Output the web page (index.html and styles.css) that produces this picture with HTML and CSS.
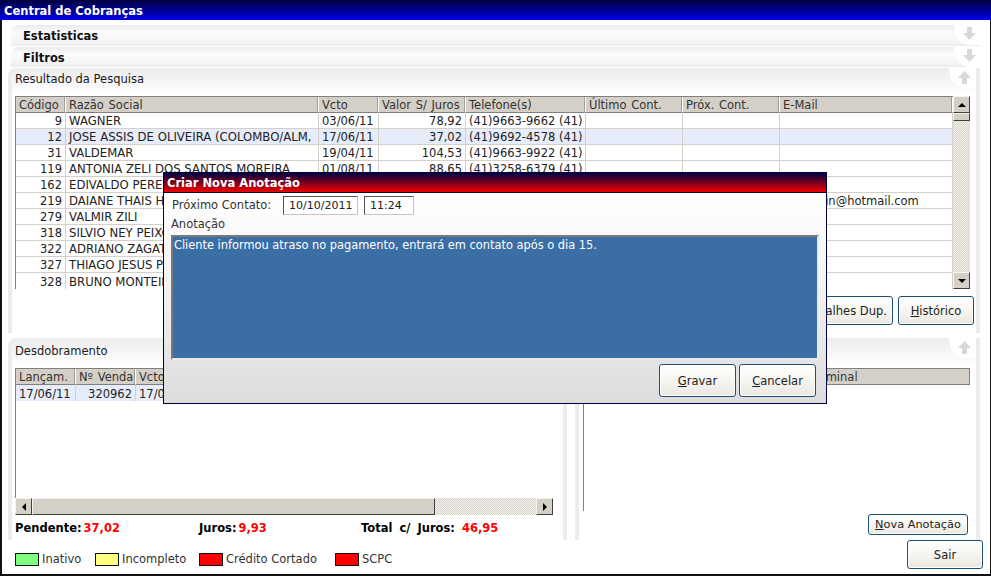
FILE: index.html
```html
<!DOCTYPE html>
<html lang="pt-BR">
<head>
<meta charset="utf-8">
<title>Central de Cobranças</title>
<link rel="stylesheet" href="styles.css">
</head>
<body>
<div class="window">
  <header class="titlebar">Central de Cobranças</header>
  <main class="content">
    <section class="strip first">
      <h2 class="strip-title">Estatisticas</h2>
      <svg class="blob" viewBox="0 0 27 20"><path class="blob-bg" d="M0 0H27V20H14Q2 18 0 2Z"/><path class="blob-arrow" d="M13 2h5v6h4l-6.500 7-6.500-7h4z"/></svg>
    </section>
    <section class="strip">
      <h2 class="strip-title">Filtros</h2>
      <svg class="blob" viewBox="0 0 27 20"><path class="blob-bg" d="M0 0H27V20H14Q2 18 0 2Z"/><path class="blob-arrow" d="M13 2h5v6h4l-6.500 7-6.500-7h4z"/></svg>
    </section>
    <section class="panel results">
      <div class="panel-head">
        <span>Resultado da Pesquisa</span>
        <svg class="blob" viewBox="0 0 27 20"><path class="blob-bg" d="M0 0H27V20H14Q2 18 0 2Z"/><path class="blob-arrow" d="M13 16h5v-6h4l-6.500-7-6.500 7h4z"/></svg>
      </div>
      <div class="results-grid">
        <div class="grid grid-main">
          <table>
            <colgroup><col class="w50"><col class="w253"><col class="w60"><col class="w87"><col class="w120"><col class="w97"><col class="w97"><col class="w173"></colgroup>
            <thead><tr><th>Código</th><th>Razão Social</th><th>Vcto</th><th>Valor S/ Juros</th><th>Telefone(s)</th><th>Último Cont.</th><th>Próx. Cont.</th><th>E-Mail</th></tr></thead>
            <tbody>
              <tr><td class="r">9</td><td>WAGNER</td><td>03/06/11</td><td class="r">78,92</td><td>(41)9663-9662 (41)</td><td></td><td></td><td></td></tr>
              <tr class="sel"><td class="r">12</td><td>JOSE ASSIS DE OLIVEIRA (COLOMBO/ALM,</td><td>17/06/11</td><td class="r">37,02</td><td>(41)9692-4578 (41)</td><td></td><td></td><td></td></tr>
              <tr><td class="r">31</td><td>VALDEMAR</td><td>19/04/11</td><td class="r">104,53</td><td>(41)9663-9922 (41)</td><td></td><td></td><td></td></tr>
              <tr><td class="r">119</td><td>ANTONIA ZELI DOS SANTOS MOREIRA</td><td>01/08/11</td><td class="r">88,65</td><td>(41)3258-6379 (41)</td><td></td><td></td><td></td></tr>
              <tr><td class="r">162</td><td>EDIVALDO PEREIRA</td><td></td><td></td><td></td><td></td><td></td><td></td></tr>
              <tr><td class="r">219</td><td>DAIANE THAIS HOFFMANN</td><td></td><td></td><td></td><td></td><td></td><td>daianelin@hotmail.com</td></tr>
              <tr><td class="r">279</td><td>VALMIR ZILI</td><td></td><td></td><td></td><td></td><td></td><td></td></tr>
              <tr><td class="r">318</td><td>SILVIO NEY PEIXOTO</td><td></td><td></td><td></td><td></td><td></td><td></td></tr>
              <tr><td class="r">322</td><td>ADRIANO ZAGATTI</td><td></td><td></td><td></td><td></td><td></td><td></td></tr>
              <tr><td class="r">327</td><td>THIAGO JESUS PEREIRA</td><td></td><td></td><td></td><td></td><td></td><td></td></tr>
              <tr><td class="r">328</td><td>BRUNO MONTEIRO</td><td></td><td></td><td></td><td></td><td></td><td></td></tr>
            </tbody>
          </table>
        </div>
        <div class="vscroll">
          <div class="sb-btn"><i class="tri tri-up"></i></div>
          <div class="sb-thumb-v"></div>
          <div class="sb-track"></div>
          <div class="sb-btn"><i class="tri tri-down"></i></div>
        </div>
      </div>
      <div class="results-actions">
        <button class="btn btn-detail" type="button">Detalhes Dup.</button>
        <button class="btn btn-hist" type="button"><u>H</u>istórico</button>
      </div>
    </section>
    <div class="split">
      <section class="panel split-left">
        <div class="panel-head"><span>Desdobramento</span></div>
        <div class="grid grid-sub">
          <table>
            <colgroup><col class="w60"><col class="w60"><col class="w60"><col class="w87"><col class="w87"><col class="w87"><col class="w96"></colgroup>
            <thead><tr><th>Lançam.</th><th>Nº Venda</th><th>Vcto</th><th>Valor</th><th>Juros</th><th>Total</th><th>Pago</th></tr></thead>
            <tbody><tr class="sel only"><td>17/06/11</td><td class="r">320962</td><td>17/06/11</td><td class="r">37,02</td><td class="r">9,93</td><td class="r">46,95</td><td></td></tr></tbody>
          </table>
        </div>
        <div class="hscroll">
          <div class="sb-btn"><i class="tri tri-left"></i></div>
          <div class="sb-thumb-h"></div>
          <div class="sb-track"></div>
          <div class="sb-btn"><i class="tri tri-right"></i></div>
        </div>
        <div class="totals">
          <div class="total"><b>Pendente:</b><b class="val">37,02</b></div>
          <div class="total"><b>Juros:</b><b class="val">9,93</b></div>
          <div class="total"><b class="label-wide">Total c/ Juros:</b><b class="val val-wide">46,95</b></div>
        </div>
      </section>
      <section class="panel split-right">
        <div class="panel-head panel-head-end">
          <svg class="blob" viewBox="0 0 27 20"><path class="blob-bg" d="M0 0H27V20H14Q2 18 0 2Z"/><path class="blob-arrow" d="M13 16h5v-6h4l-6.500-7-6.500 7h4z"/></svg>
        </div>
        <div class="grid grid-notes">
          <div class="notes-head"><span class="note-a">Data</span><span class="note-b">Usuário</span><span class="note-c">Terminal</span></div>
        </div>
        <div class="notes-actions"><button class="btn btn-note" type="button"><u>N</u>ova Anotação</button></div>
      </section>
    </div>
  </main>
  <footer class="footer">
    <ul class="legend">
      <li class="leg leg-1"><i class="swatch green"></i>Inativo</li>
      <li class="leg leg-2"><i class="swatch yellow"></i>Incompleto</li>
      <li class="leg leg-3"><i class="swatch red"></i>Crédito Cortado</li>
      <li class="leg"><i class="swatch red"></i>SCPC</li>
    </ul>
    <button class="btn btn-exit" type="button">Sair</button>
  </footer>

  <div class="modal" role="dialog">
    <div class="modal-title">Criar Nova Anotação</div>
    <div class="modal-body">
      <div class="modal-row">
        <label class="modal-label">Próximo Contato:</label>
        <input class="field field-date" value="10/10/2011">
        <input class="field field-time" value="11:24">
      </div>
      <div class="note-label">Anotação</div>
      <div class="note-text">Cliente informou atraso no pagamento, entrará em contato após o dia 15.</div>
      <div class="modal-actions">
        <button class="btn btn-modal" type="button"><u>G</u>ravar</button>
        <button class="btn btn-modal" type="button"><u>C</u>ancelar</button>
      </div>
    </div>
  </div>
</div>
</body>
</html>
```

FILE: styles.css
```css
* { box-sizing: border-box; }
html, body { margin: 0; padding: 0; }
body { font: 11.5px/15px "DejaVu Sans", Verdana, sans-serif; color: #1a1a1a; background: #fff; overflow: hidden; }

.window {
  position: relative;
  width: 991px;
  height: 576px;
  display: flex;
  flex-direction: column;
  border-left: 2px solid #111;
  border-right: 1px solid #111;
  border-bottom: 2px solid #111;
  background: #fff;
}
.titlebar {
  height: 20px;
  flex: none;
  padding: 3px 2px 0 4px;
  margin-left: -2px;
  margin-right: -1px;
  background: linear-gradient(#00003c, #0000e6);
  color: #fff;
  font-weight: bold;
  line-height: 16px;
}
.content { flex: none; height: 520px; padding: 5px 10px 0 6px; display: flex; flex-direction: column; }

.strip {
  height: 20px;
  margin: 1px -1px 0 3px;
  display: flex;
  justify-content: space-between;
  border-top-left-radius: 8px;
  background: linear-gradient(#ececec, #fbfbfb 35%, #f4f4f4 80%, #ececec);
}
.strip.first { height: 21px; margin-top: 0; }
.strip-title { margin: 0; padding: 4px 0 0 12px; font-size: 11.5px; line-height: 15px; font-weight: bold; color: #111; }
.blob { display: block; width: 27px; height: 20px; flex: none; }
.blob-bg { fill: #fff; }
.blob-arrow { fill: #d8d8d8; }

.panel {
  border-left: 4px solid #ececec;
  border-right: 4px solid #ececec;
  border-top-left-radius: 8px;
  background: linear-gradient(#ececec, #fff 28px);
}
.results { height: 265px; margin-top: 1px; flex: none; }
.panel-head { height: 20px; display: flex; justify-content: space-between; padding: 4px 0 0 3px; }
.panel-head .blob { margin-top: -4px; }
.panel-head-end { justify-content: flex-end; }
.split-left .panel-head { padding-top: 6px; }

.results-grid { display: flex; margin: 8px 6px 0 3px; height: 193px; }
.grid { border-left: 1px solid #808080; border-top: 1px solid #808080; overflow: hidden; }
.grid-main { width: 938px; }
table { table-layout: fixed; width: 100%; border-collapse: separate; border-spacing: 0; }
.w50 { width: 50px; } .w60 { width: 60px; } .w87 { width: 87px; } .w96 { width: 96px; }
.w97 { width: 97px; } .w120 { width: 120px; } .w173 { width: 173px; } .w253 { width: 253px; }
th, td { height: 16px; padding: 1px 3px 0; line-height: 14px; overflow: hidden; white-space: nowrap; text-align: left; font-weight: normal; }
th { background: #d4d0c8; color: #333; word-spacing: 1px; border-right: 1px solid #fff; border-bottom: 1px solid #808080; box-shadow: inset -1px 0 #a09d96; }
td { border-right: 1px solid #d4d0c8; border-bottom: 1px solid #d4d0c8; color: #222; }
.grid-main td:nth-child(2) { font-size: 11.7px; }
tbody tr:last-child td { border-bottom: 0; }
td.r { text-align: right; }
.sel td { background: #e6ecfa; }

.vscroll { width: 17px; display: flex; flex-direction: column; }
.sb-btn {
  width: 17px; height: 17px; flex: none;
  display: flex; align-items: center; justify-content: center;
  background: #d4d0c8;
  border: 1px solid; border-color: #f4f3ef #404040 #404040 #f4f3ef;
}
.sb-thumb-v { height: 8px; flex: none; background: #d4d0c8; border: 1px solid; border-color: #f4f3ef #404040 #404040 #f4f3ef; }
.sb-track { flex: 1; background: repeating-conic-gradient(#d4d0c8 0 25%, #f6f5f2 0 50%) 0 0 / 2px 2px; }
.tri { display: block; width: 0; height: 0; border: 4px solid transparent; }
.tri-up { border-top: 0; border-bottom-color: #000; }
.tri-down { border-bottom: 0; border-top-color: #000; }
.tri-left { border-left: 0; border-right-color: #000; }
.tri-right { border-right: 0; border-left-color: #000; }

.btn {
  font: inherit;
  color: #222;
  padding: 2px 0 0;
  border: 1px solid #1c4f7a;
  border-radius: 3px;
  background: linear-gradient(#fff, #f6f5f0 50%, #e9e7df);
  box-shadow: inset 0 0 0 1px #fdfdfb;
}
.results-actions { display: flex; justify-content: flex-end; gap: 5px; margin: 7px 2px 0 0; }
.btn-detail { width: 94px; height: 29px; }
.btn-hist { width: 76px; height: 29px; }

.split { display: grid; grid-template-columns: 559px 405px; column-gap: 8px; height: 202px; margin-top: 5px; flex: none; }
.split-left, .split-right { display: flex; flex-direction: column; }
.grid-sub { margin: 10px 8px 0 3px; width: 538px; height: 130px; flex: none; }
.only td { border-bottom: 1px solid #111; }
.hscroll { display: flex; margin-left: 3px; width: 538px; height: 17px; flex: none; }
.sb-thumb-h { width: 403px; flex: none; background: #d4d0c8; border: 1px solid; border-color: #f4f3ef #404040 #404040 #f4f3ef; }
.totals { display: grid; grid-template-columns: 184px 162px 1fr; margin: 6px 0 0 3px; }
.total { display: flex; gap: 2px; color: #000; }
.val { color: #f00; }
.label-wide { word-spacing: 3px; }
.val-wide { margin-left: 5px; }

.grid-notes { margin: 10px 6px 0 4px; flex: none; height: 143px; border-top: 0; }
.notes-head { display: flex; height: 17px; background: #d4d0c8; color: #333; border-top: 1px solid #808080; border-bottom: 1px solid #808080; border-right: 1px solid #808080; padding: 1px 0 0 3px; line-height: 14px; }
.note-a { width: 100px; }
.note-b { width: 122px; }
.note-c { flex: 1; }
.notes-actions { display: flex; justify-content: flex-end; margin: 3px 8px 0 0; }
.btn-note { width: 100px; height: 21px; padding-top: 0; font-size: 11.3px; }

.footer { flex: 1; display: flex; justify-content: space-between; align-items: flex-start; padding: 0 7px 0 13px; }
.legend { list-style: none; margin: 13px 0 0; padding: 0; display: flex; }
.leg { display: flex; align-items: center; width: 136px; height: 13px; white-space: nowrap; color: #333; }
.leg-1 { width: 80px; }
.leg-2 { width: 104px; }
.swatch { display: block; width: 24px; height: 13px; margin-right: 3px; border: 1px solid #111; flex: none; }
.green { background: #80ff80; }
.yellow { background: #ffff80; }
.red { background: #f00; }
.btn-exit { width: 76px; height: 29px; }

.modal {
  position: absolute;
  left: 161px;
  top: 172px;
  width: 664px;
  height: 232px;
  border: 1px solid #000040;
  display: flex;
  flex-direction: column;
}
.modal-title {
  height: 20px;
  flex: none;
  padding: 2px 0 0 3px;
  line-height: 16px;
  background: linear-gradient(#000040, #f00000);
  color: #fff;
  font-weight: bold;
  border-bottom: 1px solid #000040;
}
.modal-body { flex: 1; padding: 3px 7px 0; background: linear-gradient(#fff, #f4f4f4 40%, #dcdcdc); }
.modal-row { display: flex; align-items: center; height: 19px; padding-left: 1px; }
.modal-label { width: 111px; color: #333; }
.field {
  font: 11px/15px "DejaVu Sans", Verdana, sans-serif; color: #222; height: 19px; padding: 0 5px;
  background: #fff;
  border: 1px solid #c4c4c4;
  border-top-color: #555;
  border-left-color: #555;
  outline: 0;
}
.field-date { width: 75px; margin-right: 6px; }
.field-time { width: 50px; }
.note-label { height: 20px; line-height: 19px; color: #333; }
.note-text {
  height: 125px;
  width: 648px;
  padding: 1px 1px;
  font-size: 11.4px;
  background: #3b6ea5;
  color: #fff;
  border: 2px solid;
  border-color: #77797c #eceae4 #eceae4 #77797c;
}
.modal-actions { display: flex; justify-content: flex-end; gap: 3px; margin: 4px 3px 0 0; }
.btn-modal { width: 77px; height: 33px; }
```
